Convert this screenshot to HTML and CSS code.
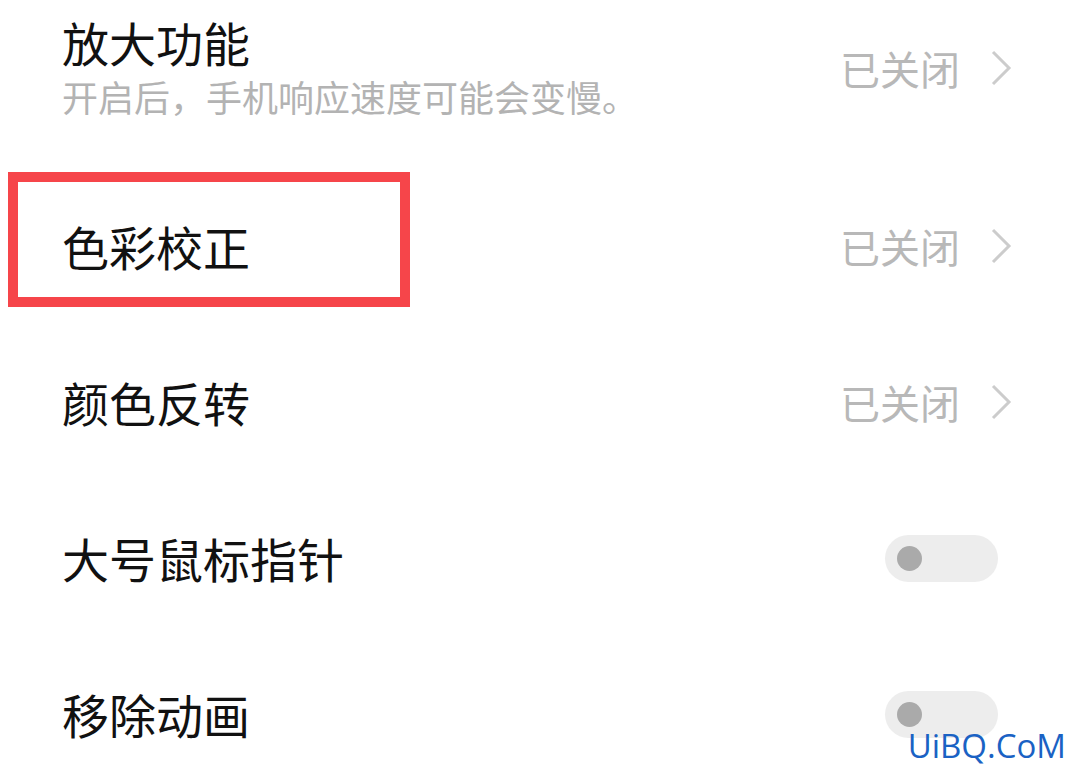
FILE: index.html
```html
<!DOCTYPE html>
<html lang="zh-CN">

<head>
    <meta charset="UTF-8">
    <meta name="viewport" content="width=device-width, initial-scale=1.0">
    <title>无障碍设置</title>
    <link rel="stylesheet" href="styles.css">
</head>

<body>
    <div class="list">
        <div class="row first">
            <div class="text">
                <div class="title">放大功能</div>
                <div class="desc">开启后，手机响应速度可能会变慢。</div>
            </div>
            <div class="status">
                <span>已关闭</span>
                <svg class="chevron" width="22" height="38" viewBox="0 0 22 38">
                    <polyline points="3,3 19,19 3,35" fill="none" stroke="#cccccc" stroke-width="3" />
                </svg>
            </div>
        </div>

        <div class="row marked">
            <div class="title">色彩校正</div>
            <div class="status">
                <span>已关闭</span>
                <svg class="chevron" width="22" height="38" viewBox="0 0 22 38">
                    <polyline points="3,3 19,19 3,35" fill="none" stroke="#cccccc" stroke-width="3" />
                </svg>
            </div>
            <div class="mark"></div>
        </div>

        <div class="row">
            <div class="title">颜色反转</div>
            <div class="status">
                <span>已关闭</span>
                <svg class="chevron" width="22" height="38" viewBox="0 0 22 38">
                    <polyline points="3,3 19,19 3,35" fill="none" stroke="#cccccc" stroke-width="3" />
                </svg>
            </div>
        </div>

        <div class="row">
            <div class="title">大号鼠标指针</div>
            <div class="switch"><span class="knob"></span></div>
        </div>

        <div class="row">
            <div class="title">移除动画</div>
            <div class="switch"><span class="knob"></span></div>
        </div>
    </div>

    <div class="watermark">UiBQ.CoM</div>
</body>

</html>
```

FILE: styles.css
```css
* {
    margin: 0;
    padding: 0;
    box-sizing: border-box;
}

body {
    width: 1076px;
    height: 768px;
    overflow: hidden;
    position: relative;
    background-color: #fff;
    font-family: "Noto Sans CJK SC", "Noto Sans", sans-serif;
}

.list {
    padding: 0 64px 0 62px;
}

.row {
    position: relative;
    display: flex;
    align-items: center;
    justify-content: space-between;
    height: 156px;
}

.row.first {
    height: 168px;
    padding-bottom: 32px;
}

.title {
    font-size: 47px;
    line-height: 56px;
    color: #111;
}

.desc {
    font-size: 36px;
    line-height: 52px;
    color: #b3b3b3;
}

.status {
    display: flex;
    align-items: center;
    gap: 30px;
    font-size: 40px;
    color: #b8b8b8;
}

.chevron {
    display: block;
}

.switch {
    position: relative;
    width: 113px;
    height: 47px;
    margin-right: 14px;
    border-radius: 24px;
    background-color: #ededed;
}

.switch .knob {
    position: absolute;
    left: 12px;
    top: 11px;
    width: 25px;
    height: 25px;
    border-radius: 50%;
    background-color: #aaaaaa;
}

/* 红色标注框 */
.mark {
    position: absolute;
    left: -54px;
    top: 4px;
    width: 402px;
    height: 135px;
    border: 10px solid #f6454a;
}

.watermark {
    position: absolute;
    right: 10px;
    bottom: 2px;
    font-family: "Open Sans", "DejaVu Sans", sans-serif;
    font-size: 33px;
    line-height: 40px;
    color: #1a62c4;
}
```
